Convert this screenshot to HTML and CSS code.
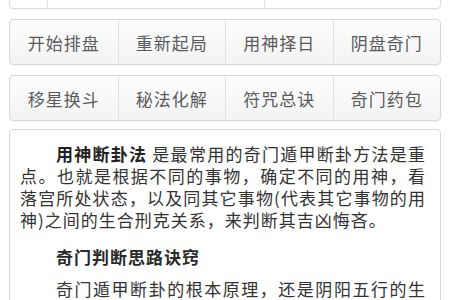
FILE: index.html
```html
<!DOCTYPE html>
<html lang="zh-CN">
<head>
<meta charset="utf-8">
<title>奇门遁甲</title>
<link rel="stylesheet" href="styles.css">
</head>
<body>
<div class="page">
  <div class="topbox">
    <div class="tcell tcell-a"></div>
    <div class="tcell tcell-b"></div>
    <div class="tcell tcell-c"></div>
  </div>
  <div class="btnrow">
    <a class="btn">开始排盘</a>
    <a class="btn">重新起局</a>
    <a class="btn">用神择日</a>
    <a class="btn">阴盘奇门</a>
  </div>
  <div class="btnrow">
    <a class="btn">移星换斗</a>
    <a class="btn">秘法化解</a>
    <a class="btn">符咒总诀</a>
    <a class="btn">奇门药包</a>
  </div>
  <div class="card">
    <p class="para"><strong class="kw">用神断卦法</strong> 是最常用的奇门遁甲断卦方法是重点。也就是根据不同的事物，确定不同的用神，看落宫所处状态，以及同其它事物(代表其它事物的用神)之间的生合刑克关系，来判断其吉凶悔吝。</p>
    <p class="heading">奇门判断思路诀窍</p>
    <p class="para">奇门遁甲断卦的根本原理，还是阴阳五行的生克制化，通过用神落宫与其它宫位的关系来判断事物的吉凶成败。</p>
  </div>
</div>
</body>
</html>
```
FILE: styles.css
```css
html, body {
  margin: 0;
  padding: 0;
  background: #ffffff;
}
body {
  font-family: "Noto Sans CJK SC", "Noto Sans", sans-serif;
  color: #333333;
  overflow: hidden;
}
.page {
  padding: 0 9px;
  display: flex;
  flex-direction: column;
}
.topbox {
  margin-top: -30px;
  height: 37px;
  border: 1px solid #dcdcdc;
  border-radius: 4px;
  display: flex;
  background: #ffffff;
  box-shadow: 0 1px 1px rgba(0,0,0,0.04);
}
.tcell {
  height: 100%;
}
.tcell-a {
  width: 37px;
  border-right: 1px solid #e2e2e2;
}
.tcell-b {
  width: 216px;
  border-right: 1px solid #e2e2e2;
}
.tcell-c {
  flex: 1;
}
.btnrow {
  margin-top: 10px;
  height: 44px;
  border: 1px solid #d8d8d8;
  border-radius: 4px;
  display: grid;
  grid-template-columns: repeat(4, 1fr);
  background: linear-gradient(#fdfdfd, #f3f3f3);
  box-shadow: 0 1px 1px rgba(0,0,0,0.05);
}
.btn {
  display: flex;
  align-items: center;
  justify-content: center;
  font-size: 17px;
  letter-spacing: 1px;
  color: #5a5a5a;
  border-left: 1px solid #e0e0e0;
  text-decoration: none;
}
.btn:first-child {
  border-left: none;
}
.card {
  margin-top: 8px;
  border: 1px solid #d8d8d8;
  border-radius: 4px;
  padding: 13px 14px 0 10px;
  background: #ffffff;
  height: 200px;
}
.para {
  margin: 0;
  font-size: 17px;
  letter-spacing: 1px;
  line-height: 22px;
  text-indent: 36px;
  text-align: justify;
  color: #333333;
}
.kw {
  font-weight: 700;
  color: #222222;
}
.heading {
  margin: 15px 0 10px;
  font-size: 17px;
  letter-spacing: 1px;
  line-height: 22px;
  text-indent: 36px;
  font-weight: 700;
  color: #2a2a2a;
}
```
